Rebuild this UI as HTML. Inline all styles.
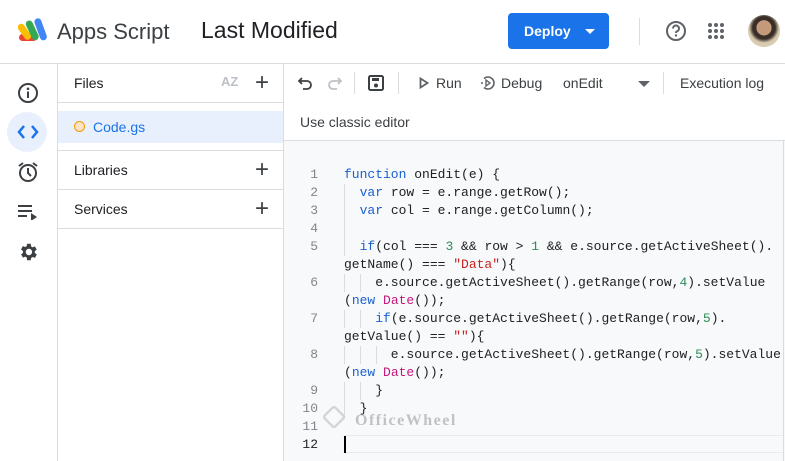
<!DOCTYPE html>
<html><head><meta charset="utf-8"><style>
*{margin:0;padding:0;box-sizing:border-box}
body{width:785px;height:461px;overflow:hidden;background:#fff;font-family:"Liberation Sans",sans-serif;color:#3c4043;position:relative}
.a{position:absolute}
.code{font-family:"Liberation Mono",monospace;font-size:13px;line-height:18px;white-space:pre;color:#202124}
.k{color:#1a5fd1}.n{color:#2e8b57}.s{color:#c5221f}.d{color:#c2187a}
.ln{font-family:"Liberation Mono",monospace;font-size:13px;color:#80868b;width:30px;text-align:right}
</style></head><body>
<svg class="a" style="left:18px;top:17px" width="34" height="28" viewBox="0 0 34 28">
<rect x="1" y="17" width="18" height="7" rx="3.5" fill="#ea4335"/>
<rect x="3" y="6" width="7" height="18" rx="3.5" fill="#fbbc04" transform="rotate(-35 6 15)"/>
<rect x="11" y="3" width="7" height="21" rx="3.5" fill="#34a853" transform="rotate(-25 14 14)"/>
<rect x="19" y="1" width="7" height="23" rx="3.5" fill="#4285f4" transform="rotate(-20 22 12)"/>
</svg>
<div class="a" style="left:57px;top:19px;font-size:22px;color:#3c4043">Apps Script</div>
<div class="a" style="left:201px;top:17px;font-size:23px;color:#202124">Last Modified</div>
<div class="a" style="left:508px;top:13px;width:101px;height:36px;background:#1a73e8;border-radius:4px;color:#fff;font-weight:bold;font-size:14px;line-height:36px;padding-left:16px">Deploy<span style="position:absolute;left:77px;top:16px;border-left:5px solid transparent;border-right:5px solid transparent;border-top:5px solid #fff"></span></div>
<div class="a" style="left:639px;top:18px;width:1px;height:27px;background:#dadce0"></div>
<svg class="a" style="left:665px;top:20px" width="22" height="22" viewBox="0 0 22 22"><circle cx="11" cy="11" r="9" fill="none" stroke="#5f6368" stroke-width="2"/><path d="M8 8.5a3 3 0 1 1 4 2.8c-.8.4-1 .9-1 1.7" fill="none" stroke="#5f6368" stroke-width="2"/><circle cx="11" cy="15.5" r="1.2" fill="#5f6368"/></svg>
<svg class="a" style="left:707px;top:22px" width="18" height="18" viewBox="0 0 18 18" fill="#5f6368"><circle cx="3" cy="3" r="2"/><circle cx="9" cy="3" r="2"/><circle cx="15" cy="3" r="2"/><circle cx="3" cy="9" r="2"/><circle cx="9" cy="9" r="2"/><circle cx="15" cy="9" r="2"/><circle cx="3" cy="15" r="2"/><circle cx="9" cy="15" r="2"/><circle cx="15" cy="15" r="2"/></svg>
<div class="a" style="left:748px;top:15px;width:32px;height:32px;border-radius:50%;background:radial-gradient(circle at 50% 40%,#c49a7a 0 30%,#3a2e28 31% 45%,#d8cbb0 60%)"></div>
<div class="a" style="left:0;top:63px;width:785px;height:1px;background:#dadce0"></div>
<div class="a" style="left:57px;top:64px;width:1px;height:397px;background:#dadce0"></div>
<svg class="a" style="left:17px;top:82px" width="22" height="22" viewBox="0 0 22 22"><circle cx="11" cy="11" r="9" fill="none" stroke="#3c4043" stroke-width="2"/><rect x="10" y="9.5" width="2" height="6.5" fill="#3c4043"/><circle cx="11" cy="6.8" r="1.3" fill="#3c4043"/></svg>
<div class="a" style="left:7px;top:112px;width:40px;height:40px;border-radius:50%;background:#e8f0fe"></div>
<svg class="a" style="left:17px;top:124px" width="22" height="16" viewBox="0 0 22 16"><path d="M7 2L2 8l5 6M15 2l5 6-5 6" fill="none" stroke="#1a73e8" stroke-width="2.5"/></svg>
<svg class="a" style="left:16px;top:160px" width="24" height="24" viewBox="0 0 24 24"><circle cx="12" cy="13" r="8" fill="none" stroke="#3c4043" stroke-width="2"/><path d="M12 8v5l3 3M3 6l4-3M21 6l-4-3" fill="none" stroke="#3c4043" stroke-width="2"/></svg>
<svg class="a" style="left:17px;top:204px" width="22" height="16" viewBox="0 0 22 16" fill="#3c4043"><rect x="1" y="1" width="14" height="2"/><rect x="1" y="6" width="14" height="2"/><rect x="1" y="11" width="9" height="2"/><path d="M14 9l6 4-6 4z"/></svg>
<svg class="a" style="left:17px;top:241px" width="22" height="22" viewBox="0 0 24 24"><path fill="#3c4043" d="M19.4 13a7.5 7.5 0 0 0 0-2l2.1-1.6-2-3.5-2.5 1a7 7 0 0 0-1.7-1L15 3h-4l-.4 2.6a7 7 0 0 0-1.7 1l-2.5-1-2 3.5L6.6 11a7.5 7.5 0 0 0 0 2l-2.1 1.6 2 3.5 2.5-1a7 7 0 0 0 1.7 1L11 21h4l.4-2.6a7 7 0 0 0 1.7-1l2.5 1 2-3.5zM13 15.5a3.5 3.5 0 1 1 0-7 3.5 3.5 0 0 1 0 7z"/></svg>
<div class="a" style="left:283px;top:64px;width:1px;height:397px;background:#dadce0"></div>
<div class="a" style="left:74px;top:75px;font-size:14px;color:#202124">Files</div>
<div class="a" style="left:221px;top:74px;font-size:13px;font-weight:bold;color:#bdc1c6">AZ</div>
<div class="a" style="left:255px;top:73px;font-size:24px;line-height:20px;color:#3c4043">+</div>
<div class="a" style="left:58px;top:102px;width:225px;height:1px;background:#dadce0"></div>
<div class="a" style="left:58px;top:111px;width:225px;height:32px;background:#e8f0fe"></div>
<div class="a" style="left:74px;top:121px;width:11px;height:11px;border-radius:50%;border:1.5px solid #f29900;background:#fde3c4"></div>
<div class="a" style="left:93px;top:119px;font-size:14px;color:#1a73e8">Code.gs</div>
<div class="a" style="left:58px;top:150px;width:225px;height:1px;background:#dadce0"></div>
<div class="a" style="left:74px;top:162px;font-size:14px;color:#202124">Libraries</div>
<div class="a" style="left:255px;top:160px;font-size:24px;line-height:20px;color:#3c4043">+</div>
<div class="a" style="left:58px;top:189px;width:225px;height:1px;background:#dadce0"></div>
<div class="a" style="left:74px;top:201px;font-size:14px;color:#202124">Services</div>
<div class="a" style="left:255px;top:199px;font-size:24px;line-height:20px;color:#3c4043">+</div>
<div class="a" style="left:58px;top:228px;width:225px;height:1px;background:#dadce0"></div>
<svg class="a" style="left:298px;top:76px" width="16" height="14" viewBox="0 0 16 14"><path d="M4 2L1 5l3 3M1 5h8a4 4 0 0 1 0 8H5" fill="none" stroke="#3c4043" stroke-width="1.8"/></svg>
<svg class="a" style="left:326px;top:76px" width="16" height="14" viewBox="0 0 16 14"><path d="M12 2l3 3-3 3M15 5H7a4 4 0 0 0 0 8h4" fill="none" stroke="#bdc1c6" stroke-width="1.8"/></svg>
<div class="a" style="left:354px;top:72px;width:1px;height:22px;background:#dadce0"></div>
<svg class="a" style="left:368px;top:75px" width="16" height="16" viewBox="0 0 16 16"><rect x="1" y="1" width="14" height="14" rx="1.5" fill="none" stroke="#3c4043" stroke-width="2"/><rect x="4" y="3" width="7" height="3" fill="#3c4043"/><circle cx="8" cy="10.5" r="2" fill="#3c4043"/></svg>
<div class="a" style="left:398px;top:72px;width:1px;height:22px;background:#dadce0"></div>
<svg class="a" style="left:419px;top:77px" width="10" height="12" viewBox="0 0 10 12"><path d="M1.5 1.5v9l7-4.5z" fill="none" stroke="#5f6368" stroke-width="1.8"/></svg>
<div class="a" style="left:436px;top:75px;font-size:14px;color:#3c4043">Run</div>
<svg class="a" style="left:480px;top:75px" width="16" height="16" viewBox="0 0 16 16"><path d="M4 3.5A6 6 0 1 1 4 12.5" fill="none" stroke="#5f6368" stroke-width="1.6"/><path d="M6 5v6l4-3z" fill="none" stroke="#5f6368" stroke-width="1.4"/><path d="M1 8h2" stroke="#5f6368" stroke-width="1.5"/></svg>
<div class="a" style="left:501px;top:75px;font-size:14px;color:#3c4043">Debug</div>
<div class="a" style="left:563px;top:75px;font-size:14px;color:#3c4043">onEdit</div>
<div class="a" style="left:638px;top:81px;border-left:6px solid transparent;border-right:6px solid transparent;border-top:6px solid #5f6368"></div>
<div class="a" style="left:663px;top:72px;width:1px;height:22px;background:#dadce0"></div>
<div class="a" style="left:680px;top:75px;font-size:14px;color:#3c4043">Execution log</div>
<div class="a" style="left:300px;top:114px;font-size:14px;color:#3c4043">Use classic editor</div>
<div class="a" style="left:284px;top:140px;width:501px;height:321px;background:#f8f9fa;border-top:1px solid #dadce0"></div>
<div class="a" style="left:783px;top:140px;width:1px;height:321px;background:#dadce0"></div>
<div class="a" style="left:343px;top:435px;width:440px;height:18px;border-top:1px solid #e8eaed;border-bottom:1px solid #e8eaed"></div>
<div class="a" style="left:344px;top:436px;width:2px;height:17px;background:#000"></div>
<div class="a" style="left:344px;top:184px;width:1px;height:72px;background:#dadce0"></div>
<div class="a" style="left:344px;top:274px;width:1px;height:18px;background:#dadce0"></div>
<div class="a" style="left:344px;top:310px;width:1px;height:18px;background:#dadce0"></div>
<div class="a" style="left:344px;top:346px;width:1px;height:18px;background:#dadce0"></div>
<div class="a" style="left:344px;top:382px;width:1px;height:36px;background:#dadce0"></div>
<div class="a" style="left:360px;top:274px;width:1px;height:18px;background:#dadce0"></div>
<div class="a" style="left:360px;top:310px;width:1px;height:18px;background:#dadce0"></div>
<div class="a" style="left:360px;top:346px;width:1px;height:18px;background:#dadce0"></div>
<div class="a" style="left:360px;top:382px;width:1px;height:18px;background:#dadce0"></div>
<div class="a" style="left:376px;top:346px;width:1px;height:18px;background:#dadce0"></div>
<div class="a ln" style="left:288px;top:166px;line-height:18px">1<br>2<br>3<br>4<br>5<br><br>6<br><br>7<br><br>8<br><br>9<br>10<br>11<br><span style="color:#202124">12</span></div>
<div class="a code" style="left:344px;top:166px"><span class="k">function</span> onEdit(e) {
  <span class="k">var</span> row = e.range.getRow();
  <span class="k">var</span> col = e.range.getColumn();

  <span class="k">if</span>(col === <span class="n">3</span> &amp;&amp; row &gt; <span class="n">1</span> &amp;&amp; e.source.getActiveSheet().
getName() === <span class="s">"Data"</span>){
    e.source.getActiveSheet().getRange(row,<span class="n">4</span>).setValue
(<span class="k">new</span> <span class="d">Date</span>());
    <span class="k">if</span>(e.source.getActiveSheet().getRange(row,<span class="n">5</span>).
getValue() == <span class="s">""</span>){
      e.source.getActiveSheet().getRange(row,<span class="n">5</span>).setValue
(<span class="k">new</span> <span class="d">Date</span>());
    }
  }</div>
<div class="a" style="left:323px;top:406px;width:22px;height:22px;border:3px solid #c8cacc;border-radius:4px;transform:rotate(45deg) scale(.8);opacity:.8"></div>
<div class="a" style="left:355px;top:412px;font-family:'Liberation Serif',serif;font-size:16px;font-weight:bold;letter-spacing:1.5px;color:#c0c2c4">OfficeWheel</div>
</body></html>
